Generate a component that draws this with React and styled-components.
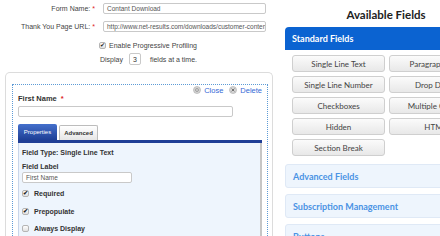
import React from 'react'
import styled, { createGlobalStyle } from 'styled-components'

const GlobalStyle = createGlobalStyle`
  html, body {
    margin: 0;
    padding: 0;
    background: #fff;
    overflow: hidden;
  }
  * { box-sizing: border-box; }
`

const Page = styled.div`
  width: 440px;
  height: 236px;
  display: flex;
  overflow: hidden;
`

const Left = styled.div`
  width: 280px;
  flex-shrink: 0;
  padding-top: 3px;
  font-family: "Liberation Sans", Arial, sans-serif;
`

const FormRow = styled.div`
  display: grid;
  grid-template-columns: 95px 163px;
  column-gap: 8px;
  align-items: center;
  margin-bottom: ${p => p.$gap || 7}px;
`

const Label = styled.label`
  text-align: right;
  font-size: 7px;
  color: #444;
`

const Req = styled.span`
  color: #d22;
  margin-left: 2px;
`

const TextInput = styled.div`
  height: 11px;
  width: ${p => p.$w || '100%'};
  border: 1px solid #c9c9c9;
  border-radius: 2px;
  font-size: 6.5px;
  line-height: 9px;
  padding: 0 3px;
  color: #555;
  white-space: nowrap;
  overflow: hidden;
  background: #fff;
`

const OptionRow = styled.div`
  display: flex;
  align-items: center;
  gap: ${p => p.$gap || 3}px;
  margin-left: ${p => p.$indent}px;
  height: ${p => p.$h || 10}px;
  margin-bottom: ${p => p.$mb || 0}px;
  font-size: 7px;
  color: #444;
`

const SmallBox = styled.div`
  width: 12px;
  height: 12px;
  border: 1px solid #c9c9c9;
  border-radius: 2px;
  font-size: 7px;
  display: flex;
  align-items: center;
  justify-content: center;
  color: #333;
  margin: 0 6px 0 3px;
`

const Check = styled.span`
  width: 7px;
  height: 7px;
  border: 1px solid #b5b5b5;
  border-radius: 2px;
  background: linear-gradient(#fdfdfd, #e2e2e2);
  display: inline-flex;
  align-items: center;
  justify-content: center;
  font-size: 6px;
  line-height: 1;
  color: #222;
  flex-shrink: 0;
`

const Card = styled.div`
  margin: 0 7px 0 5px;
  height: 200px;
  border: 1px solid #dcdcdc;
  border-bottom: none;
  border-radius: 5px 5px 0 0;
  padding: 11px 4px 0 6px;
`

const Dotted = styled.div`
  height: 200px;
  border: 1px dotted #5d9bd6;
  border-bottom: none;
  padding: 0 5px 0 5px;
`

const Actions = styled.div`
  height: 10px;
  display: flex;
  justify-content: flex-end;
  align-items: center;
  gap: 6px;
`

const Action = styled.span`
  display: inline-flex;
  align-items: center;
  gap: 3px;
  font-size: 7.5px;
  color: #3569d6;
`

const FieldTitle = styled.div`
  font-size: 7.5px;
  font-weight: bold;
  line-height: 8px;
  color: #333;
  margin-bottom: 3px;
`

const Tabs = styled.div`
  margin-top: 7px;
  display: flex;
  align-items: flex-end;
  gap: 2px;
  height: 16px;
`

const Tab = styled.div`
  width: ${p => p.$w}px;
  height: ${p => (p.$active ? 16 : 15)}px;
  border-radius: 2px 2px 0 0;
  font-size: 6px;
  display: flex;
  align-items: center;
  justify-content: center;
  background: ${p => (p.$active ? 'linear-gradient(#4470cc, #1e3f96)' : 'linear-gradient(#ffffff, #e6e6e6)')};
  color: ${p => (p.$active ? '#fff' : '#333')};
  border: ${p => (p.$active ? 'none' : '1px solid #bcbcbc')};
  border-bottom: none;
  font-weight: ${p => (p.$active ? 'normal' : 'bold')};
`

const TabBar = styled.div`
  height: 3px;
  background: #1f3e96;
`

const Panel = styled.div`
  height: 120px;
  background: #eef5fd;
  border-left: 1px solid #c9d6ea;
  border-right: 2px solid #c6c6c6;
  padding: 5px 4px 0 3px;
`

const PanelText = styled.div`
  font-size: 7px;
  font-weight: bold;
  line-height: 9px;
  color: #333;
  margin-top: ${p => p.$mt || 0}px;
`

const CheckRow = styled.div`
  display: flex;
  align-items: center;
  gap: 5px;
  height: 10px;
  margin-top: ${p => p.$mt}px;
  font-size: 7px;
  font-weight: bold;
  color: #333;
`

const Right = styled.div`
  width: 202px;
  flex-shrink: 0;
  margin-left: 5px;
  font-family: Lato, "Open Sans", sans-serif;
`

const Title = styled.div`
  padding-top: 8px;
  height: 27px;
  text-align: center;
  font-size: 11.5px;
  font-weight: bold;
  color: #222;
  line-height: 14px;
`

const SectionHead = styled.div`
  height: 23px;
  background: #0b63d1;
  border-radius: 4px 0 0 0;
  color: #fff;
  font-size: 9px;
  font-weight: bold;
  display: flex;
  align-items: center;
  padding-left: 7px;
`

const Grid = styled.div`
  display: grid;
  grid-template-columns: 93px 93px;
  column-gap: 4px;
  row-gap: 4px;
  padding: 5px 0 0 7px;
`

const FieldButton = styled.div`
  height: 17px;
  border: 1px solid #cfcfcf;
  border-radius: 3px;
  background: linear-gradient(#fbfbfb, #e8e8e8);
  font-size: 8px;
  color: #444;
  display: flex;
  align-items: center;
  justify-content: center;
  white-space: nowrap;
  overflow: hidden;
`

const Collapsed = styled.div`
  height: 24px;
  margin-top: ${p => p.$mt || 7}px;
  background: #eef5fd;
  border: 1px solid #dfe9f6;
  border-radius: 3px;
  color: #4a93e4;
  font-size: 9px;
  font-weight: bold;
  display: flex;
  align-items: center;
  padding-left: 7px;
`

const CloseIcon = () => (
  <svg width="8" height="8" viewBox="0 0 8 8">
    <circle cx="4" cy="4" r="3.5" fill="#d6d6d6" stroke="#aaa" strokeWidth="0.6" />
    <circle cx="4" cy="4" r="1.5" fill="none" stroke="#888" strokeWidth="0.7" />
  </svg>
)

const DeleteIcon = () => (
  <svg width="8" height="8" viewBox="0 0 8 8">
    <circle cx="4" cy="4" r="3.5" fill="#d6d6d6" stroke="#aaa" strokeWidth="0.6" />
    <path d="M2.6 2.6 L5.4 5.4 M5.4 2.6 L2.6 5.4" stroke="#666" strokeWidth="0.9" />
  </svg>
)

const buttons = [
  'Single Line Text', 'Paragraph Text',
  'Single Line Number', 'Drop Down',
  'Checkboxes', 'Multiple Choice',
  'Hidden', 'HTML',
  'Section Break',
]

export default function App() {
  return (
    <Page>
      <GlobalStyle />
      <Left>
        <FormRow>
          <Label>Form Name:<Req>*</Req></Label>
          <TextInput>Contant Download</TextInput>
        </FormRow>
        <FormRow $gap={8}>
          <Label>Thank You Page URL:<Req>*</Req></Label>
          <TextInput>http://www.net-results.com/downloads/customer-contents</TextInput>
        </FormRow>
        <OptionRow $indent={99} $gap={3} $mb={3}>
          <Check>✔</Check>
          Enable Progressive Profiling
        </OptionRow>
        <OptionRow $indent={100} $h={12} $gap={0} $mb={7}>
          Display<SmallBox>3</SmallBox>fields at a time.
        </OptionRow>
        <Card>
          <Dotted>
            <Actions>
              <Action><CloseIcon />Close</Action>
              <Action><DeleteIcon />Delete</Action>
            </Actions>
            <FieldTitle>First Name <Req>*</Req></FieldTitle>
            <TextInput $w="215px" />
            <Tabs>
              <Tab $active $w={39}>Properties</Tab>
              <Tab $w={39}>Advanced</Tab>
            </Tabs>
            <TabBar />
            <Panel>
              <PanelText>Field Type: Single Line Text</PanelText>
              <PanelText $mt={5}>Field Label</PanelText>
              <TextInput $w="110px" style={{ marginTop: 1 }}>First Name</TextInput>
              <CheckRow $mt={5}><Check>✔</Check>Required</CheckRow>
              <CheckRow $mt={8}><Check>✔</Check>Prepopulate</CheckRow>
              <CheckRow $mt={7}><Check />Always Display</CheckRow>
            </Panel>
          </Dotted>
        </Card>
      </Left>
      <Right>
        <Title>Available Fields</Title>
        <SectionHead>Standard Fields</SectionHead>
        <Grid>
          {buttons.map(b => <FieldButton key={b}>{b}</FieldButton>)}
        </Grid>
        <Collapsed $mt={8}>Advanced Fields</Collapsed>
        <Collapsed $mt={6}>Subscription Management</Collapsed>
        <Collapsed $mt={6}>Buttons</Collapsed>
      </Right>
    </Page>
  )
}
